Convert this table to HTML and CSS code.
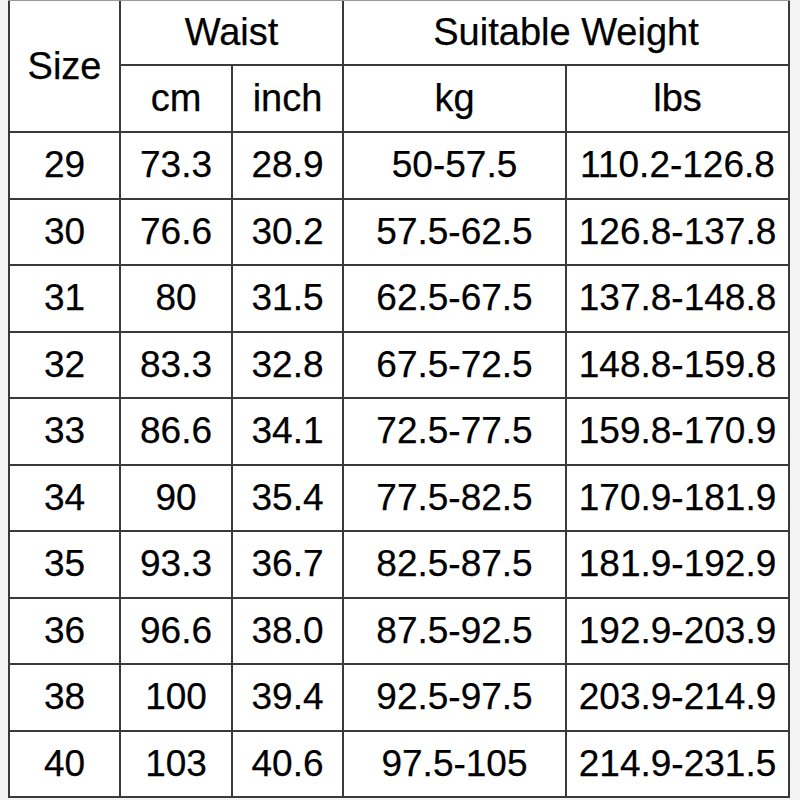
FILE: index.html
```html
<!DOCTYPE html>
<html>
<head>
<meta charset="utf-8">
<link rel="stylesheet" href="styles.css">
</head>
<body>
<div class="chart">
  <div class="cell head size-head">Size</div>
  <div class="cell head span2">Waist</div>
  <div class="cell head span2">Suitable Weight</div>
  <div class="cell head">cm</div>
  <div class="cell head">inch</div>
  <div class="cell head">kg</div>
  <div class="cell head">lbs</div>

  <div class="cell">29</div><div class="cell">73.3</div><div class="cell">28.9</div><div class="cell">50-57.5</div><div class="cell">110.2-126.8</div>
  <div class="cell">30</div><div class="cell">76.6</div><div class="cell">30.2</div><div class="cell">57.5-62.5</div><div class="cell">126.8-137.8</div>
  <div class="cell">31</div><div class="cell">80</div><div class="cell">31.5</div><div class="cell">62.5-67.5</div><div class="cell">137.8-148.8</div>
  <div class="cell">32</div><div class="cell">83.3</div><div class="cell">32.8</div><div class="cell">67.5-72.5</div><div class="cell">148.8-159.8</div>
  <div class="cell">33</div><div class="cell">86.6</div><div class="cell">34.1</div><div class="cell">72.5-77.5</div><div class="cell">159.8-170.9</div>
  <div class="cell">34</div><div class="cell">90</div><div class="cell">35.4</div><div class="cell">77.5-82.5</div><div class="cell">170.9-181.9</div>
  <div class="cell">35</div><div class="cell">93.3</div><div class="cell">36.7</div><div class="cell">82.5-87.5</div><div class="cell">181.9-192.9</div>
  <div class="cell">36</div><div class="cell">96.6</div><div class="cell">38.0</div><div class="cell">87.5-92.5</div><div class="cell">192.9-203.9</div>
  <div class="cell">38</div><div class="cell">100</div><div class="cell">39.4</div><div class="cell">92.5-97.5</div><div class="cell">203.9-214.9</div>
  <div class="cell">40</div><div class="cell">103</div><div class="cell">40.6</div><div class="cell">97.5-105</div><div class="cell">214.9-231.5</div>
</div>
</body>
</html>
```
FILE: styles.css
```css
html, body {
  margin: 0;
  padding: 0;
  background: #f3f3f3;
}
body {
  padding-left: 8px;
  font-family: "Liberation Sans", Arial, sans-serif;
}
.chart {
  width: 782px;
  box-sizing: border-box;
  display: grid;
  grid-template-columns: 109px 110px 109px 221px 221px;
  grid-template-rows: 63px 65px repeat(10, 64.5px);
  gap: 2px;
  padding: 0 2px 2px 2px;
  border-top: 1px solid #9a9a9a;
  background: #3a3a3a;
}
.cell {
  background: #ffffff;
  color: #000;
  font-size: 37px;
  -webkit-text-stroke: 0.25px #000;
  display: flex;
  align-items: center;
  justify-content: center;
  white-space: nowrap;
}
.head {
  font-size: 38px;
}
.size-head {
  grid-row: span 2;
}
.span2 {
  grid-column: span 2;
}
```
